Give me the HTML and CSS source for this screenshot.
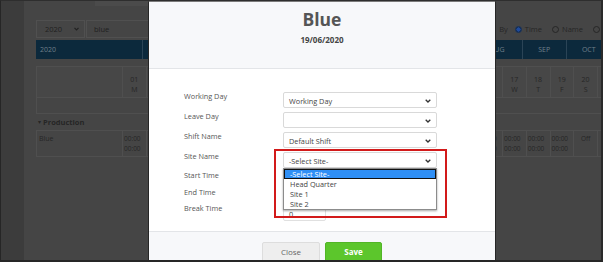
FILE: index.html
```html
<!DOCTYPE html>
<html>
<head>
<meta charset="utf-8">
<link rel="stylesheet" href="styles.css">
</head>
<body>
<div class="frame">
  <div class="sidebar"></div>
  <div class="bg-main">
    <div class="topstrip"></div>
    <div class="toolbar">
      <div class="yearsel"><span>2020</span><svg width="5" height="4" viewBox="0 0 5 4"><polyline points="0.5,0.8 2.5,2.8 4.5,0.8" fill="none" stroke="#222" stroke-width="1.2"/></svg></div>
      <div class="search">blue</div>
      <div class="sortby">
        <span>By</span>
        <span class="radio on"></span><span>Time</span>
        <span class="radio"></span><span>Name</span>
        <span class="radio"></span>
      </div>
    </div>
    <div class="months">
      <div class="mcell m-year">2020</div>
      <div class="mcell m-fill"></div>
      <div class="mcell m-mon m-aug">AUG</div>
      <div class="mcell m-mon">SEP</div>
      <div class="mcell m-mon">OCT</div>
    </div>
    <div class="trow days">
      <div class="tcell first"></div>
      <div class="tcell day">01<br>M</div><div class="tcell day"></div><div class="tcell day"></div><div class="tcell day"></div><div class="tcell day"></div><div class="tcell day"></div><div class="tcell day"></div><div class="tcell day"></div><div class="tcell day"></div><div class="tcell day"></div><div class="tcell day"></div><div class="tcell day"></div><div class="tcell day"></div><div class="tcell day"></div><div class="tcell day"></div><div class="tcell day"></div><div class="tcell day">17<br>W</div><div class="tcell day">18<br>T</div><div class="tcell day">19<br>F</div><div class="tcell day">20<br>S</div><div class="tcell day"></div>
    </div>
    <div class="trow empty"></div>
    <div class="group"><span class="caret">▾</span> Production</div>
    <div class="trow person">
      <div class="tcell first">Blue</div>
      <div class="tcell time">00:00<br>00:00</div><div class="tcell time"></div><div class="tcell time"></div><div class="tcell time"></div><div class="tcell time"></div><div class="tcell time"></div><div class="tcell time"></div><div class="tcell time"></div><div class="tcell time"></div><div class="tcell time"></div><div class="tcell time"></div><div class="tcell time"></div><div class="tcell time"></div><div class="tcell time"></div><div class="tcell time"></div><div class="tcell time">00:00<br>00:00</div><div class="tcell time">00:00<br>00:00</div><div class="tcell time">00:00<br>00:00</div><div class="tcell time">00:00<br>00:00</div><div class="tcell time off">Off</div><div class="tcell time"></div>
    </div>
  </div>

  <div class="modal">
    <div class="modal-header">
      <div class="title">Blue</div>
      <div class="date">19/06/2020</div>
    </div>
    <div class="modal-body">
      <div class="frow">
        <div class="label">Working Day</div>
        <div class="select"><span>Working Day</span><svg class="chev" width="6" height="4" viewBox="0 0 6 4"><polyline points="0.7,0.7 3,3 5.3,0.7" fill="none" stroke="#333" stroke-width="1.3"/></svg></div>
      </div>
      <div class="frow">
        <div class="label">Leave Day</div>
        <div class="select"><span></span><svg class="chev" width="6" height="4" viewBox="0 0 6 4"><polyline points="0.7,0.7 3,3 5.3,0.7" fill="none" stroke="#333" stroke-width="1.3"/></svg></div>
      </div>
      <div class="frow">
        <div class="label">Shift Name</div>
        <div class="select"><span>Default Shift</span><svg class="chev" width="6" height="4" viewBox="0 0 6 4"><polyline points="0.7,0.7 3,3 5.3,0.7" fill="none" stroke="#333" stroke-width="1.3"/></svg></div>
      </div>
      <div class="frow site">
        <div class="label">Site Name</div>
        <div class="select"><span>-Select Site-</span><svg class="chev" width="6" height="4" viewBox="0 0 6 4"><polyline points="0.7,0.7 3,3 5.3,0.7" fill="none" stroke="#333" stroke-width="1.3"/></svg></div>
      </div>
      <div class="frow trow-s">
        <div class="label">Start Time</div>
        <div class="input"></div>
      </div>
      <div class="frow trow-s">
        <div class="label">End Time</div>
        <div class="input"></div>
      </div>
      <div class="frow trow-s">
        <div class="label">Break Time</div>
        <div class="input">0</div>
      </div>
    </div>
    <div class="modal-footer">
      <div class="btn close">Close</div>
      <div class="btn save">Save</div>
    </div>

    <div class="dropdown">
      <div class="opt sel">-Select Site-</div>
      <div class="opt">Head Quarter</div>
      <div class="opt">Site 1</div>
      <div class="opt">Site 2</div>
    </div>
    <div class="redbox"></div>
  </div>
</div>
</body>
</html>
```

FILE: styles.css
```css
html, body {
  margin: 0;
  padding: 0;
  background: #3a3a3a;
}

.frame {
  width: 603px;
  height: 262px;
  box-sizing: border-box;
  border-left: 1px solid #262626;
  border-top: 1px solid #2e2e2e;
  border-right: 2px solid #2a2a2a;
  border-bottom: 2px solid #262626;
  position: relative;
  overflow: hidden;
  display: flex;
  font-family: "Open Sans", "DejaVu Sans", sans-serif;
}

.sidebar {
  width: 23px;
  flex: none;
  background: #3c3c3c;
}

.bg-main {
  flex: 1;
  min-width: 0;
  padding-left: 12px;
  background: #454545;
  overflow: hidden;
  color: #272727;
  font-size: 7px;
}

.topstrip {
  margin-left: 59px;
  width: 200px;
  height: 5px;
  background: #4b4b4b;
}

.toolbar {
  display: flex;
  margin-top: 14px;
  height: 18px;
}

.yearsel {
  width: 49px;
  box-sizing: border-box;
  border: 1px solid #505050;
  display: flex;
  align-items: center;
  justify-content: space-between;
  padding: 0 5px 0 8px;
  font-size: 7.5px;
  color: #1f1f1f;
}

.search {
  width: 64px;
  box-sizing: border-box;
  border: 1px solid #505050;
  margin-left: 1px;
  padding-left: 7px;
  display: flex;
  align-items: center;
  font-size: 7.5px;
  color: #1f1f1f;
}

.sortby {
  margin-left: auto;
  display: flex;
  align-items: center;
  gap: 3px;
  padding-right: 1px;
  font-size: 7.5px;
  color: #262626;
}

.radio {
  width: 7px;
  height: 7px;
  box-sizing: border-box;
  border: 1px solid #262626;
  border-radius: 50%;
  margin-left: 7px;
}

.radio.on {
  border-color: #15305a;
  background: radial-gradient(circle, #1f4a9c 55%, #15305a 60%);
  margin-left: 4px;
}

.months {
  display: flex;
  margin-top: 2px;
  height: 19px;
  background: #0c293c;
  width: 620px;
}

.mcell {
  box-sizing: border-box;
  border-right: 1px solid #2b4456;
  color: #6f7f89;
  font-size: 7px;
  display: flex;
  align-items: center;
  flex: none;
}

.m-year { width: 107px; padding-left: 4px; }
.m-fill { width: 335px; }
.m-mon { width: 44.5px; justify-content: center; }
.m-aug { padding-right: 5px; }

.trow {
  display: flex;
  width: 620px;
  box-sizing: border-box;
  border-left: 1px solid #4f4f4f;
  border-bottom: 1px solid #4f4f4f;
}

.days {
  margin-top: 7px;
  height: 32px;
  border-top: 1px solid #4f4f4f;
  background: #474747;
}

.tcell {
  flex: none;
  box-sizing: border-box;
  border-right: 1px solid #4f4f4f;
}

.tcell.first {
  width: 86px;
  padding: 3px 2px;
  font-size: 7px;
  color: #262626;
}

.day {
  width: 23.75px;
  text-align: center;
  font-size: 7px;
  line-height: 10px;
  padding-top: 8px;
  color: #262626;
}

.empty {
  height: 16px;
}

.group {
  height: 17px;
  display: flex;
  align-items: center;
  padding-left: 2px;
  font-weight: bold;
  font-size: 7.5px;
  color: #262626;
  border-bottom: 1px solid #4f4f4f;
  width: 620px;
  box-sizing: border-box;
}

.caret {
  font-size: 6px;
  margin-right: 2px;
}

.person {
  height: 26px;
}

.time {
  width: 23.75px;
  font-size: 6.5px;
  line-height: 10px;
  padding: 3px 0 0 1px;
  color: #262626;
}

.time.off {
  text-align: center;
  padding-left: 0;
}

/* Modal */
.modal {
  position: absolute;
  left: 147px;
  top: -1px;
  width: 348px;
  height: 263px;
  box-sizing: border-box;
  border-left: 1px solid #262626;
  border-right: 1px solid #262626;
  border-top: 2px solid #7b7b7b;
  background: #fff;
  display: flex;
  flex-direction: column;
}

.modal-header {
  height: 58px;
  flex: none;
  background: #f7f8fa;
  border-bottom: 1px solid #e3e5e8;
  text-align: center;
  padding-top: 8px;
}

.title {
  font-size: 17.5px;
  line-height: 18px;
  font-weight: bold;
  color: #555;
}

.date {
  margin-top: 7px;
  font-size: 8px;
  line-height: 10px;
  font-weight: bold;
  color: #444;
}

.modal-body {
  height: 162px;
  flex: none;
  box-sizing: border-box;
  padding: 21px 0 0 35px;
  background: #fff;
}

.frow {
  display: flex;
  align-items: flex-start;
  height: 20px;
}

.frow.site {
  height: 19px;
}

.frow.trow-s {
  height: 16.7px;
}

.label {
  width: 99px;
  flex: none;
  font-size: 7.3px;
  line-height: 13px;
  color: #555;
}

.select {
  width: 154px;
  height: 16px;
  margin-top: 2px;
  box-sizing: border-box;
  border: 1px solid #d9d9d9;
  border-radius: 2px;
  background: #fff;
  display: flex;
  align-items: center;
  justify-content: space-between;
  padding: 1px 5px 0 5px;
  font-size: 7.3px;
  color: #444;
}

.chev {
  display: block;
}

.input {
  width: 43px;
  height: 17px;
  margin-top: 2px;
  box-sizing: border-box;
  border: 1px solid #e0e0e0;
  border-radius: 2px;
  padding: 3px 0 0 5px;
  font-size: 7.3px;
  line-height: 13px;
  color: #444;
}

.modal-footer {
  flex: 1;
  background: #f7f8fa;
  border-top: 1px solid #e3e5e8;
  display: flex;
  justify-content: center;
  align-items: flex-start;
  gap: 5px;
  padding-top: 10px;
}

.btn {
  height: 22px;
  box-sizing: border-box;
  display: flex;
  align-items: center;
  justify-content: center;
  font-size: 8px;
  border-radius: 2px;
  padding-bottom: 3px;
}

.btn.close {
  width: 58px;
  background: #eeeeee;
  border: 1px solid #dddddd;
  color: #666;
}

.btn.save {
  width: 57px;
  background: #5cc62c;
  border: 1px solid #52b527;
  color: #fff;
  font-weight: bold;
}

.dropdown {
  position: absolute;
  left: 134px;
  top: 166px;
  width: 154px;
  height: 42px;
  box-sizing: border-box;
  border: 1px solid #8c8c8c;
  background: #fff;
  box-shadow: 0 1px 2px rgba(0, 0, 0, 0.35);
}

.opt {
  height: 10px;
  line-height: 10px;
  font-size: 7.3px;
  color: #444;
  padding-left: 6px;
  box-sizing: border-box;
}

.opt.sel {
  background: #2f8ff5;
  color: #fff;
  border: 1px solid #111;
  line-height: 8px;
  padding-left: 5px;
}

.redbox {
  position: absolute;
  left: 125px;
  top: 147px;
  width: 173px;
  height: 69px;
  box-sizing: border-box;
  border: 2px solid #d21a1a;
}
```
